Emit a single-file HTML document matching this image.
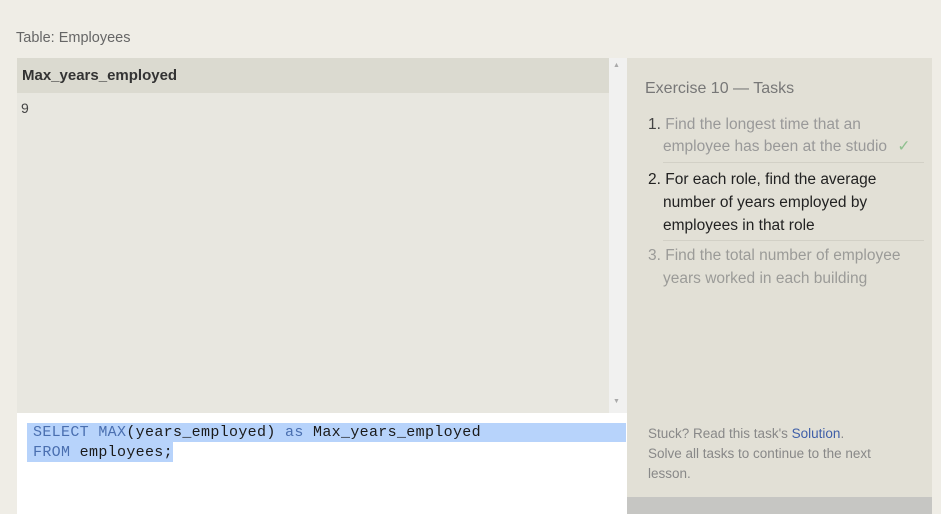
<!DOCTYPE html>
<html><head><style>
*{margin:0;padding:0;box-sizing:border-box}
body{width:941px;height:514px;background:#efede6;font-family:"Liberation Sans",sans-serif;position:relative;overflow:hidden}
.a{position:absolute}
.mono{font-family:"Liberation Mono",monospace;font-size:15px;color:#1a1a1a;line-height:20px;letter-spacing:0.33px}
.kw{color:#4a6fb0}
</style></head><body>
<div class="a" style="left:16px;top:30px;font-size:14.5px;color:#666">Table: Employees</div>
<div class="a" style="left:17px;top:58px;width:592px;height:355px;background:#e8e7e0"></div>
<div class="a" style="left:17px;top:58px;width:592px;height:35px;background:#dbdad0"></div>
<div class="a" style="left:22px;top:67px;font-size:15px;font-weight:bold;color:#333">Max_years_employed</div>
<div class="a" style="left:21px;top:100px;font-size:14px;color:#444">9</div>
<div class="a" style="left:609px;top:58px;width:18px;height:355px;background:#f1f1f0"></div>
<div class="a" style="left:613px;top:62px;font-size:7px;color:#aaa">▲</div>
<div class="a" style="left:613px;top:398px;font-size:7px;color:#aaa">▼</div>
<div class="a" style="left:17px;top:413px;width:610px;height:101px;background:#fff"></div>
<div class="a" style="left:27px;top:423px;width:599px;height:19px;background:#b7d3fb"></div>
<div class="a" style="left:27px;top:442px;width:146px;height:20px;background:#b7d3fb"></div>
<div class="a mono" style="left:33px;top:423px"><span class="kw">SELECT</span> <span class="kw">MAX</span>(years_employed) <span class="kw">as</span> Max_years_employed<br><span class="kw">FROM</span> employees;</div>
<div class="a" style="left:627px;top:58px;width:305px;height:456px;background:#e2e0d6"></div>
<div class="a" style="left:627px;top:497px;width:305px;height:17px;background:#c6c6c3"></div>
<div class="a" style="left:645px;top:80px;font-size:16px;color:#777">Exercise 10 — Tasks</div>
<div class="a" style="left:648px;top:114px;font-size:15.5px;line-height:22px;color:#999;width:280px"><span style="color:#444">1.</span> Find the longest time that an<br><span style="padding-left:15px">employee has been at the studio</span> <span style="color:#8fc08f;margin-left:6px">✓</span></div>
<div class="a" style="left:663px;top:162px;width:261px;height:1px;background:#d2d0c6"></div>
<div class="a" style="left:648px;top:168px;font-size:15.5px;line-height:23px;color:#222">2. For each role, find the average<br><span style="padding-left:15px">number of years employed by</span><br><span style="padding-left:15px">employees in that role</span></div>
<div class="a" style="left:663px;top:240px;width:261px;height:1px;background:#d2d0c6"></div>
<div class="a" style="left:648px;top:244px;font-size:15.5px;line-height:23px;color:#9b9b98">3. Find the total number of employee<br><span style="padding-left:15px">years worked in each building</span></div>
<div class="a" style="left:648px;top:424px;font-size:13.5px;line-height:20px;color:#888">Stuck? Read this task's <span style="color:#3f5fa8">Solution</span>.<br>Solve all tasks to continue to the next<br>lesson.</div>
</body></html>
